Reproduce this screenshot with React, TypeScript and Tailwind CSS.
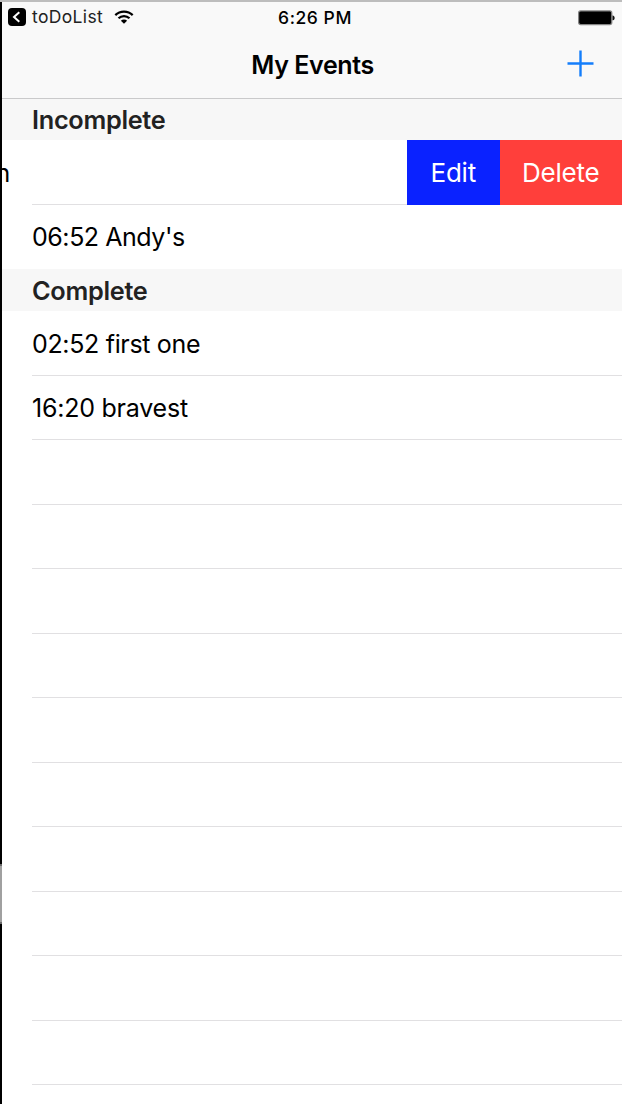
import React from "react";

const emptyRows = [
  "h-[65px]", "h-[64px]", "h-[65px]", "h-[64px]", "h-[65px]",
  "h-[64px]", "h-[65px]", "h-[64px]", "h-[65px]", "h-[64px]",
];

function StatusBar() {
  return (
    <div className="grid h-[30px] grid-cols-[1fr_auto_1fr] items-center pl-[6px] pr-[7px] text-[17.5px] leading-[30px] text-black">
      <div className="flex items-center pb-[2px]">
        <svg width="18" height="18" viewBox="0 0 18 18" aria-hidden="true">
          <rect width="18" height="18" rx="4" fill="#000" />
          <path d="M11.3 4.2 6 9l5.3 4.8" fill="none" stroke="#fff" strokeWidth="2" />
        </svg>
        <span className="ml-[6px] w-[71px] whitespace-nowrap tracking-[0.35px] text-[#222]">toDoList</span>
        <svg className="ml-[11px]" width="20" height="14" viewBox="0 0 20 14" aria-hidden="true">
          <g fill="none" stroke="#000" strokeWidth="2.2">
            <path d="M1.3 5.1a12.4 12.4 0 0 1 17.4 0" />
            <path d="M4.5 8.3a7.8 7.8 0 0 1 11 0" />
          </g>
          <path d="M6.9 10.7a4.4 4.4 0 0 1 6.2 0L10 13.8z" fill="#000" />
        </svg>
      </div>
      <span className="pb-px pl-[7px] font-medium tracking-[0.55px]">6:26 PM</span>
      <svg className="justify-self-end" width="37" height="16" viewBox="0 0 37 16" aria-hidden="true">
        <rect x="0.6" y="0.9" width="33.2" height="13.7" rx="2" fill="#000" stroke="#858585" strokeWidth="1.2" />
        <path d="M34.5 5.5h.5c2.2.8 2.2 4 0 4.8h-.5z" fill="#111" />
      </svg>
    </div>
  );
}

function SectionHeader({ title, className }: { title: string; className: string }) {
  return (
    <h2 className={`flex items-center bg-[#f7f7f7] pl-[30px] text-[25.3px] font-semibold tracking-[-0.3px] text-[#222] ${className}`}>
      {title}
    </h2>
  );
}

export default function App() {
  return (
    <div className="flex h-[1104px] w-[622px] flex-col overflow-hidden bg-white font-['Inter',sans-serif]">
      <div className="h-[2px] shrink-0 bg-[#bdbdbd]" />
      <div className="flex min-h-0 flex-1">
        <div className="flex w-[2px] shrink-0 flex-col bg-black pt-[862px]">
          <div className="h-[60px] border-y-2 border-[#6b6b6b] bg-[#a0a0a0]" />
        </div>
        <main className="min-w-0 flex-1 overflow-hidden">
          <header className="h-[97px] border-b border-[#cacacb] bg-[#f9f9f9]">
            <StatusBar />
            <div className="grid h-[63px] grid-cols-[1fr_auto_1fr] items-center pl-[29px] pr-[28px]">
              <span />
              <h1 className="pt-[5px] text-[25px] font-semibold tracking-[-0.4px] text-black">My Events</h1>
              <button className="justify-self-end" aria-label="Add event">
                <svg width="27" height="27" viewBox="0 0 27 27">
                  <path d="M0.5 13.5h26M13.5 0.5v26" stroke="#147efb" strokeWidth="2.4" />
                </svg>
              </button>
            </div>
          </header>
          <SectionHeader title="Incomplete" className="h-[41px] pt-px" />
          <div className="flex h-[65px] text-[25px]">
            <div className="flex w-[30px] items-center pt-[2px]">
              <span className="-ml-[6.5px]">n</span>
            </div>
            <div className="flex-1 border-b border-[#e1e0e2]" />
            <button className="w-[92.5px] bg-[#0a22ff] pb-px text-[26px] font-normal tracking-[-0.2px] text-white">Edit</button>
            <button className="w-[122.5px] bg-[#ff3f3b] pb-px text-[26px] font-normal tracking-[-0.2px] text-white">Delete</button>
          </div>
          <div className="flex h-[64px] items-center pl-[30px] pt-[2px] text-[25px] tracking-[-0.45px]">06:52 Andy's</div>
          <SectionHeader title="Complete" className="h-[42px] pt-px" />
          <div className="pl-[30px] text-[25px]">
            <div className="flex h-[65px] items-center border-b border-[#e1e0e2] pt-[3px] tracking-[-0.33px]">02:52 first one</div>
            <div className="flex h-[64px] items-center border-b border-[#e1e0e2] pt-[3px] tracking-[-0.23px]">16:20 bravest</div>
            {emptyRows.map((height, i) => (
              <div key={i} className={`${height} border-b border-[#e1e0e2]`} />
            ))}
          </div>
        </main>
      </div>
    </div>
  );
}
